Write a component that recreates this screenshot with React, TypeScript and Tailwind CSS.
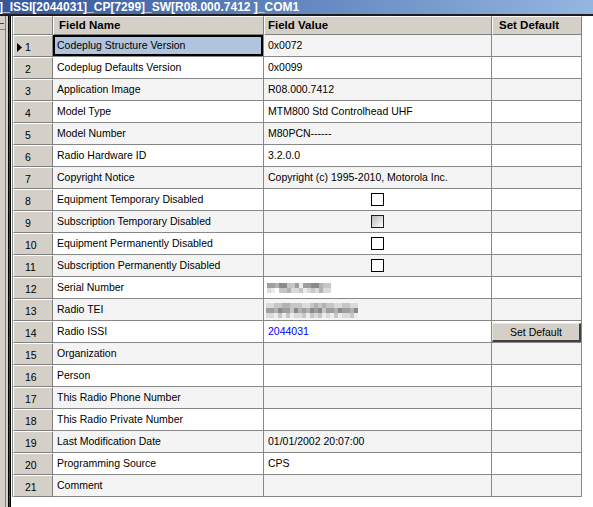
import React from 'react';

type Kind = 'text' | 'check' | 'hover' | 'blur1' | 'blur2' | 'link';

interface Row {
  name: string;
  value?: string;
  kind: Kind;
  button?: boolean;
}

const rows: Row[] = [
  { name: 'Codeplug Structure Version', value: '0x0072', kind: 'text' },
  { name: 'Codeplug Defaults Version', value: '0x0099', kind: 'text' },
  { name: 'Application Image', value: 'R08.000.7412', kind: 'text' },
  { name: 'Model Type', value: 'MTM800 Std Controlhead UHF', kind: 'text' },
  { name: 'Model Number', value: 'M80PCN------', kind: 'text' },
  { name: 'Radio Hardware ID', value: '3.2.0.0', kind: 'text' },
  { name: 'Copyright Notice', value: 'Copyright (c) 1995-2010, Motorola Inc.', kind: 'text' },
  { name: 'Equipment Temporary Disabled', kind: 'check' },
  { name: 'Subscription Temporary Disabled', kind: 'hover' },
  { name: 'Equipment Permanently Disabled', kind: 'check' },
  { name: 'Subscription Permanently Disabled', kind: 'check' },
  { name: 'Serial Number', kind: 'blur1' },
  { name: 'Radio TEI', kind: 'blur2' },
  { name: 'Radio ISSI', value: '2044031', kind: 'link', button: true },
  { name: 'Organization', kind: 'text' },
  { name: 'Person', kind: 'text' },
  { name: 'This Radio Phone Number', kind: 'text' },
  { name: 'This Radio Private Number', kind: 'text' },
  { name: 'Last Modification Date', value: '01/01/2002 20:07:00', kind: 'text' },
  { name: 'Programming Source', value: 'CPS', kind: 'text' },
  { name: 'Comment', kind: 'text' },
];

// masked values: each digit picks a shade
const shades = [
  'bg-white',
  'bg-[#ececec]',
  'bg-[#dadada]',
  'bg-[#c6c6c6]',
  'bg-[#b2b2b2]',
  'bg-[#9e9e9e]',
  'bg-[#8a8a8a]',
];

const serialMask = ['5546633515566433', '2103342231232422'];
const teiMask = [
  '22334433322343433223322',
  '55465536454656355465546',
  '22131312231323121312231',
];

function Masked({ pattern }: { pattern: string[] }) {
  return (
    <div className="flex flex-col">
      {pattern.map((line, i) => (
        <div key={i} className="flex">
          {line.split('').map((c, j) => (
            <div key={j} className={`w-[4px] h-[5px] ${shades[Number(c)]}`} />
          ))}
        </div>
      ))}
    </div>
  );
}

function CheckBox({ hover }: { hover?: boolean }) {
  return hover ? (
    <div className="w-[13px] h-[13px] border border-[#0000ff] bg-linear-to-br from-[#b8b8b8] to-white" />
  ) : (
    <div className="w-[13px] h-[13px] border border-black bg-white" />
  );
}

function TitleBar() {
  return (
    <div className="h-[16px] border-b-2 border-[#1c1c1c] bg-linear-to-r from-[#35579a] to-[#93b6e2] flex items-center overflow-hidden">
      <span className="text-white font-bold text-[12px] leading-none whitespace-nowrap -ml-[1px]">
        ]_ISSI[2044031]_CP[7299]_SW[R08.000.7412 ]_COM1
      </span>
    </div>
  );
}

function LeftStrip() {
  return (
    <div className="flex shrink-0">
      <div className="w-[5px] bg-[#d4d0c8] flex flex-col">
        <div className="h-[13px] mt-[1px] border-b border-[#808080] flex items-center">
          <div className="w-[4px] h-[1px] bg-[#404040]" />
        </div>
      </div>
      <div className="w-[1px] bg-[#808080]" />
      <div className="w-[2px] bg-[#d4d0c8]" />
      <div className="w-[1px] bg-black" />
      <div className="w-[1px] bg-[#404040]" />
      <div className="w-[1px] bg-black" />
      <div className="w-[1px] bg-white" />
    </div>
  );
}

function HeaderRow() {
  return (
    <div className="flex h-[19px] font-bold text-[11.5px]">
      <div className="w-[40px] bg-[#d4d0c8] border-t border-l border-white border-b border-r border-b-[#808080] border-r-[#808080]" />
      <div className="w-[211px] bg-[#d4d0c8] border-t border-l border-white border-b border-r border-b-[#808080] border-r-[#808080] flex items-center pl-[5px]">
        Field Name
      </div>
      <div className="w-[228px] bg-[#d4d0c8] border-t border-l border-white border-b border-r border-b-[#808080] border-r-[#808080] flex items-center pl-[3px]">
        Field Value
      </div>
      <div className="w-[90px] bg-[#d4d0c8] border-t border-l border-white border-b border-r border-b-[#808080] border-r-[#808080] flex items-center pl-[6px]">
        Set Default
      </div>
    </div>
  );
}

function DataRow({ row, index }: { row: Row; index: number }) {
  const shaded = index % 2 === 0;
  const bg = shaded ? 'bg-[#f4f4f4]' : 'bg-white';
  const current = index === 0;

  let value: React.ReactNode = null;
  if (row.kind === 'check' || row.kind === 'hover') {
    value = (
      <div className="flex-1 flex justify-center">
        <CheckBox hover={row.kind === 'hover'} />
      </div>
    );
  } else if (row.kind === 'blur1') {
    value = <div className="pl-[3px] pt-[1px]"><Masked pattern={serialMask} /></div>;
  } else if (row.kind === 'blur2') {
    value = <div className="pl-[2px] pt-[2px]"><Masked pattern={teiMask} /></div>;
  } else if (row.kind === 'link') {
    value = <span className="pl-[4px] text-[#0000ff]">{row.value}</span>;
  } else if (row.value) {
    value = <span className="pl-[4px]">{row.value}</span>;
  }

  return (
    <div className="flex h-[22px]">
      <div className="w-[40px] bg-[#d4d0c8] border-t border-l border-white border-b border-r border-b-[#808080] border-r-[#808080] flex items-center pl-[3px] pt-[3px]">
        <div className="w-[8px] flex items-center">
          {current && (
            <svg width="5" height="9" viewBox="0 0 5 9">
              <path d="M0 0 L5 4.5 L0 9 Z" fill="#000" />
            </svg>
          )}
        </div>
        <span>{index + 1}</span>
      </div>
      <div
        className={`w-[211px] border-b border-r border-[#888888] flex items-center pl-[4px] ${
          current ? 'bg-[#b0c4de] ring-2 ring-inset ring-black' : bg
        }`}
      >
        {row.name}
      </div>
      <div className={`w-[228px] ${bg} border-b border-r border-[#888888] flex items-center`}>{value}</div>
      <div className={`w-[90px] ${bg} border-b border-r border-[#888888] flex items-start`}>
        {row.button && (
          <button className="mt-[2px] w-[89px] h-[19px] bg-[#d4d0c8] border-t border-l border-[#e8e6e0] border-r-2 border-b-2 border-r-[#404040] border-b-[#404040] flex items-center justify-center text-black">
            Set Default
          </button>
        )}
      </div>
    </div>
  );
}

export default function App() {
  return (
    <div className="w-[593px] h-[507px] overflow-hidden bg-white flex flex-col text-black text-[10.5px] leading-none font-['Liberation_Sans',Arial,sans-serif]">
      <TitleBar />
      <div className="flex flex-1">
        <LeftStrip />
        <div className="flex-1 bg-white">
          <div className="w-[570px] border-l border-[#888888]">
            <HeaderRow />
            {rows.map((row, i) => (
              <DataRow key={row.name} row={row} index={i} />
            ))}
          </div>
        </div>
      </div>
    </div>
  );
}
